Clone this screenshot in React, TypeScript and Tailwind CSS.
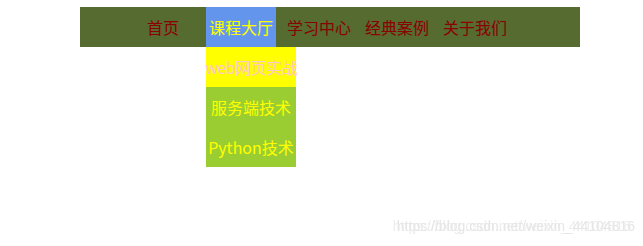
import React from "react";

const font = { fontFamily: '"Noto Sans CJK SC", "DejaVu Sans", sans-serif' };

export default function App() {
  const items = ["首页", "课程大厅", "学习中心", "经典案例", "关于我们"];
  return (
    <div className="relative w-[643px] h-[246px] bg-white overflow-hidden" style={font}>
      <div className="pt-[7px] pl-[80px]">
        <ul className="flex w-[500px] h-[40px] bg-[#556b2f] pl-[48px] gap-[8px]">
          {items.map((t, i) => (
            <li
              key={t}
              className={
                "relative w-[70px] h-[40px] flex items-center justify-center text-[16px] leading-none whitespace-nowrap " +
                (i === 1 ? "bg-[#6495ed] text-[#ffff00]" : "text-[#8b0000]")
              }
            >
              {t}
              {i === 1 && (
                <ul className="absolute left-0 top-[40px] w-[90px] flex flex-col">
                  <li className="h-[40px] bg-[#ffff00] text-[#ffc8c8] flex items-center justify-center text-[16px] whitespace-nowrap tracking-[-0.5px]">
                    web网页实战
                  </li>
                  <li className="h-[40px] bg-[#9acd32] text-[#ffff00] flex items-center justify-center text-[16px] whitespace-nowrap">
                    服务端技术
                  </li>
                  <li className="h-[40px] bg-[#9acd32] text-[#ffff00] flex items-center justify-center text-[16px] whitespace-nowrap">
                    Python技术
                  </li>
                </ul>
              )}
            </li>
          ))}
        </ul>
      </div>
      <div
        className="absolute right-[8px] top-[216px] text-[14px] text-[#e6e6e6] whitespace-nowrap blur-[0.4px] [text-shadow:-4px_0_0_#eeeeee]"
        style={{ fontFamily: '"Liberation Sans", Arial, sans-serif' }}
      >
        https://blog.csdn.net/weixin_44104816
      </div>
    </div>
  );
}
